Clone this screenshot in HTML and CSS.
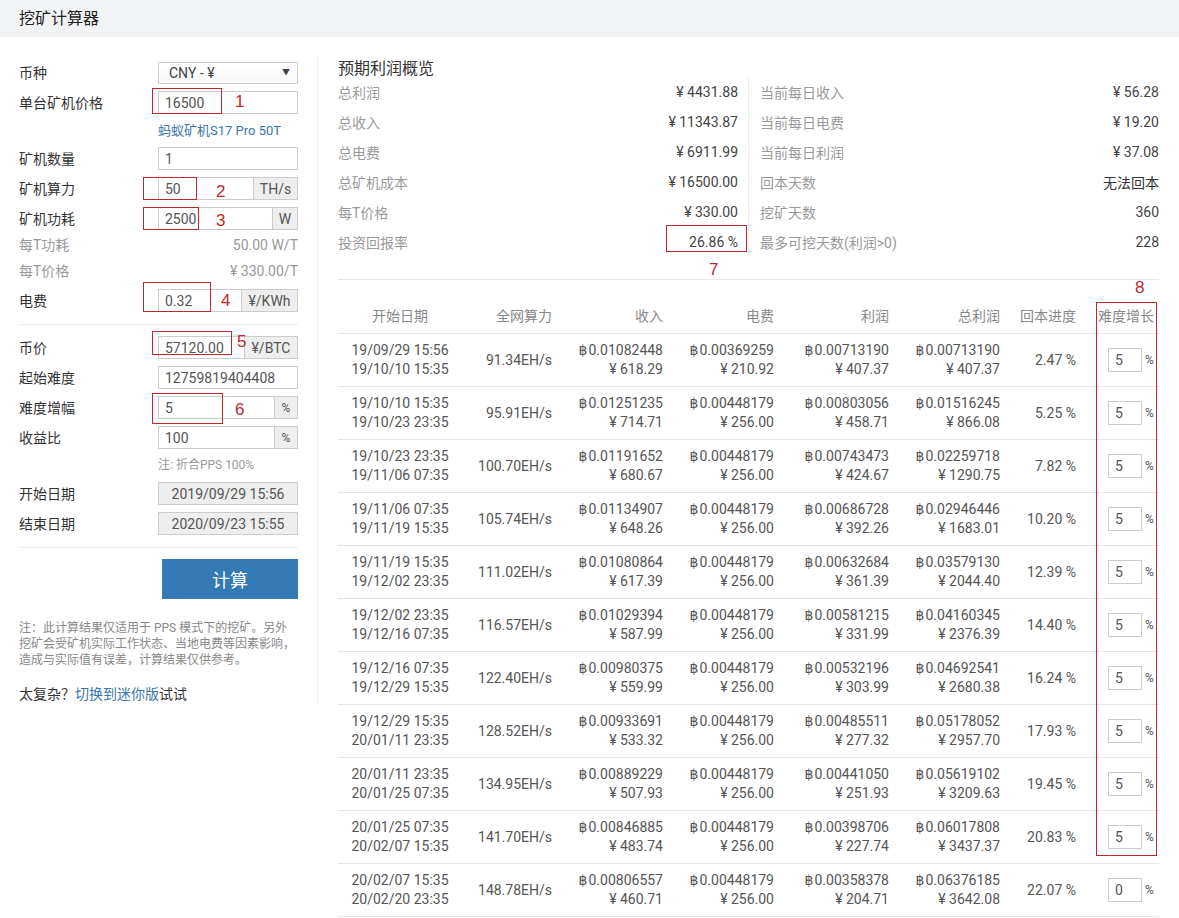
FILE: index.html
```html
<!DOCTYPE html>
<html lang="zh-CN">
<head>
<meta charset="utf-8">
<title>挖矿计算器</title>
<link rel="stylesheet" href="styles.css">
</head>
<body>
<header class="topbar">挖矿计算器</header>
<div class="main">
  <aside class="form">
    <div class="row sel-row"><label>币种</label><div class="select">CNY - ¥<span class="caret">▼</span></div></div>
    <div class="row"><label>单台矿机价格</label><div class="group"><input type="text" value="16500" readonly></div></div>
    <div class="link-row"><a class="link">蚂蚁矿机S17 Pro 50T</a></div>
    <div class="row"><label>矿机数量</label><div class="group"><input type="text" value="1" readonly></div></div>
    <div class="row"><label>矿机算力</label><div class="group"><input type="text" value="50" readonly><span class="addon w44">TH/s</span></div></div>
    <div class="row"><label>矿机功耗</label><div class="group"><input type="text" value="2500" readonly><span class="addon w25">W</span></div></div>
    <div class="info-row"><span>每T功耗</span><span>50.00 W/T</span></div>
    <div class="info-row"><span>每T价格</span><span>¥ 330.00/T</span></div>
    <div class="row"><label>电费</label><div class="group"><input type="text" value="0.32" readonly><span class="addon w56">¥/KWh</span></div></div>
    <div class="divider"></div>
    <div class="row"><label>币价</label><div class="group"><input type="text" value="57120.00" readonly><span class="addon w53">¥/BTC</span></div></div>
    <div class="row"><label>起始难度</label><div class="group"><input type="text" value="12759819404408" readonly></div></div>
    <div class="row"><label>难度增幅</label><div class="group"><input type="text" value="5" readonly><span class="addon w23">%</span></div></div>
    <div class="row"><label>收益比</label><div class="group"><input type="text" value="100" readonly><span class="addon w23">%</span></div></div>
    <div class="hint-row">注: 折合PPS 100%</div>
    <div class="row"><label>开始日期</label><div class="group"><input class="date" type="text" value="2019/09/29 15:56" readonly></div></div>
    <div class="row"><label>结束日期</label><div class="group"><input class="date" type="text" value="2020/09/23 15:55" readonly></div></div>
    <div class="divider last"></div>
    <div class="btn-row"><button class="calc">计算</button></div>
    <p class="note">注：此计算结果仅适用于 PPS 模式下的挖矿。另外挖矿会受矿机实际工作状态、当地电费等因素影响，造成与实际值有误差，计算结果仅供参考。</p>
    <p class="mini">太复杂<span class="fw">？</span><a class="link">切换到迷你版</a>试试</p>
  </aside>

  <section class="result">
    <h2 class="title">预期利润概览</h2>
    <div class="summary">
      <div class="scol left">
        <div class="srow"><span class="k">总利润</span><span class="v">¥ 4431.88</span></div>
        <div class="srow"><span class="k">总收入</span><span class="v">¥ 11343.87</span></div>
        <div class="srow"><span class="k">总电费</span><span class="v">¥ 6911.99</span></div>
        <div class="srow"><span class="k">总矿机成本</span><span class="v">¥ 16500.00</span></div>
        <div class="srow"><span class="k">每T价格</span><span class="v">¥ 330.00</span></div>
        <div class="srow"><span class="k">投资回报率</span><span class="v">26.86 %</span></div>
      </div>
      <div class="scol right">
        <div class="srow"><span class="k">当前每日收入</span><span class="v">¥ 56.28</span></div>
        <div class="srow"><span class="k">当前每日电费</span><span class="v">¥ 19.20</span></div>
        <div class="srow"><span class="k">当前每日利润</span><span class="v">¥ 37.08</span></div>
        <div class="srow"><span class="k">回本天数</span><span class="v dark">无法回本</span></div>
        <div class="srow"><span class="k">挖矿天数</span><span class="v">360</span></div>
        <div class="srow"><span class="k">最多可挖天数(利润&gt;0)</span><span class="v">228</span></div>
      </div>
    </div>
    <div class="rule"></div>
    <table class="tbl">
      <colgroup>
        <col class="c1"><col class="c2"><col class="c3"><col class="c4"><col class="c5"><col class="c6"><col class="c7"><col class="c8">
      </colgroup>
      <thead>
        <tr><th class="center">开始日期</th><th>全网算力</th><th>收入</th><th>电费</th><th>利润</th><th>总利润</th><th>回本进度</th><th class="lft">难度增长</th></tr>
      </thead>
      <tbody>
        <tr><td class="center">19/09/29 15:56<br>19/10/10 15:35</td><td>91.34EH/s</td><td><span class="b">฿</span>0.01082448<br>¥ 618.29</td><td><span class="b">฿</span>0.00369259<br>¥ 210.92</td><td><span class="b">฿</span>0.00713190<br>¥ 407.37</td><td><span class="b">฿</span>0.00713190<br>¥ 407.37</td><td>2.47 %</td><td class="lft"><input class="dif" type="text" value="5" readonly><span class="pc">%</span></td></tr>
        <tr><td class="center">19/10/10 15:35<br>19/10/23 23:35</td><td>95.91EH/s</td><td><span class="b">฿</span>0.01251235<br>¥ 714.71</td><td><span class="b">฿</span>0.00448179<br>¥ 256.00</td><td><span class="b">฿</span>0.00803056<br>¥ 458.71</td><td><span class="b">฿</span>0.01516245<br>¥ 866.08</td><td>5.25 %</td><td class="lft"><input class="dif" type="text" value="5" readonly><span class="pc">%</span></td></tr>
        <tr><td class="center">19/10/23 23:35<br>19/11/06 07:35</td><td>100.70EH/s</td><td><span class="b">฿</span>0.01191652<br>¥ 680.67</td><td><span class="b">฿</span>0.00448179<br>¥ 256.00</td><td><span class="b">฿</span>0.00743473<br>¥ 424.67</td><td><span class="b">฿</span>0.02259718<br>¥ 1290.75</td><td>7.82 %</td><td class="lft"><input class="dif" type="text" value="5" readonly><span class="pc">%</span></td></tr>
        <tr><td class="center">19/11/06 07:35<br>19/11/19 15:35</td><td>105.74EH/s</td><td><span class="b">฿</span>0.01134907<br>¥ 648.26</td><td><span class="b">฿</span>0.00448179<br>¥ 256.00</td><td><span class="b">฿</span>0.00686728<br>¥ 392.26</td><td><span class="b">฿</span>0.02946446<br>¥ 1683.01</td><td>10.20 %</td><td class="lft"><input class="dif" type="text" value="5" readonly><span class="pc">%</span></td></tr>
        <tr><td class="center">19/11/19 15:35<br>19/12/02 23:35</td><td>111.02EH/s</td><td><span class="b">฿</span>0.01080864<br>¥ 617.39</td><td><span class="b">฿</span>0.00448179<br>¥ 256.00</td><td><span class="b">฿</span>0.00632684<br>¥ 361.39</td><td><span class="b">฿</span>0.03579130<br>¥ 2044.40</td><td>12.39 %</td><td class="lft"><input class="dif" type="text" value="5" readonly><span class="pc">%</span></td></tr>
        <tr><td class="center">19/12/02 23:35<br>19/12/16 07:35</td><td>116.57EH/s</td><td><span class="b">฿</span>0.01029394<br>¥ 587.99</td><td><span class="b">฿</span>0.00448179<br>¥ 256.00</td><td><span class="b">฿</span>0.00581215<br>¥ 331.99</td><td><span class="b">฿</span>0.04160345<br>¥ 2376.39</td><td>14.40 %</td><td class="lft"><input class="dif" type="text" value="5" readonly><span class="pc">%</span></td></tr>
        <tr><td class="center">19/12/16 07:35<br>19/12/29 15:35</td><td>122.40EH/s</td><td><span class="b">฿</span>0.00980375<br>¥ 559.99</td><td><span class="b">฿</span>0.00448179<br>¥ 256.00</td><td><span class="b">฿</span>0.00532196<br>¥ 303.99</td><td><span class="b">฿</span>0.04692541<br>¥ 2680.38</td><td>16.24 %</td><td class="lft"><input class="dif" type="text" value="5" readonly><span class="pc">%</span></td></tr>
        <tr><td class="center">19/12/29 15:35<br>20/01/11 23:35</td><td>128.52EH/s</td><td><span class="b">฿</span>0.00933691<br>¥ 533.32</td><td><span class="b">฿</span>0.00448179<br>¥ 256.00</td><td><span class="b">฿</span>0.00485511<br>¥ 277.32</td><td><span class="b">฿</span>0.05178052<br>¥ 2957.70</td><td>17.93 %</td><td class="lft"><input class="dif" type="text" value="5" readonly><span class="pc">%</span></td></tr>
        <tr><td class="center">20/01/11 23:35<br>20/01/25 07:35</td><td>134.95EH/s</td><td><span class="b">฿</span>0.00889229<br>¥ 507.93</td><td><span class="b">฿</span>0.00448179<br>¥ 256.00</td><td><span class="b">฿</span>0.00441050<br>¥ 251.93</td><td><span class="b">฿</span>0.05619102<br>¥ 3209.63</td><td>19.45 %</td><td class="lft"><input class="dif" type="text" value="5" readonly><span class="pc">%</span></td></tr>
        <tr><td class="center">20/01/25 07:35<br>20/02/07 15:35</td><td>141.70EH/s</td><td><span class="b">฿</span>0.00846885<br>¥ 483.74</td><td><span class="b">฿</span>0.00448179<br>¥ 256.00</td><td><span class="b">฿</span>0.00398706<br>¥ 227.74</td><td><span class="b">฿</span>0.06017808<br>¥ 3437.37</td><td>20.83 %</td><td class="lft"><input class="dif" type="text" value="5" readonly><span class="pc">%</span></td></tr>
        <tr><td class="center">20/02/07 15:35<br>20/02/20 23:35</td><td>148.78EH/s</td><td><span class="b">฿</span>0.00806557<br>¥ 460.71</td><td><span class="b">฿</span>0.00448179<br>¥ 256.00</td><td><span class="b">฿</span>0.00358378<br>¥ 204.71</td><td><span class="b">฿</span>0.06376185<br>¥ 3642.08</td><td>22.07 %</td><td class="lft"><input class="dif" type="text" value="0" readonly><span class="pc">%</span></td></tr>
      </tbody>
    </table>
  </section>
</div>

<div class="ann-box b1"></div><span class="ann-n n1">1</span>
<div class="ann-box b2"></div><span class="ann-n n2">2</span>
<div class="ann-box b3"></div><span class="ann-n n3">3</span>
<div class="ann-box b4"></div><span class="ann-n n4">4</span>
<div class="ann-box b5"></div><span class="ann-n n5">5</span>
<div class="ann-box b6"></div><span class="ann-n n6">6</span>
<div class="ann-box b7"></div><span class="ann-n n7">7</span>
<div class="ann-box b8"></div><span class="ann-n n8">8</span>
</body>
</html>
```
FILE: styles.css
```css
* { box-sizing: border-box; margin: 0; padding: 0; }
html, body { background: #fff; }
body {
  margin: 0;
  position: relative;
  width: 1179px;
  height: 918px;
  overflow: hidden;
  font-family: Roboto, "Noto Sans CJK SC", sans-serif;
  font-size: 14px;
  color: #333;
}
.topbar {
  height: 37px;
  background: #f2f3f5;
  padding-left: 19px;
  font-size: 16px;
  line-height: 37px;
  color: #222;
  font-weight: normal;
}
.main {
  display: flex;
  align-items: flex-start;
  padding-top: 19px;
}

/* ---------- form ---------- */
.form {
  width: 318px;
  flex: none;
  padding: 6px 19px 0 19px;
  border-right: 1px solid #eee;
}
.row {
  display: flex;
  align-items: center;
  height: 23px;
  margin-bottom: 7px;
}
.row.sel-row { height: 22px; }
.row label {
  width: 139px;
  flex: none;
  line-height: 20px;
  color: #333;
}
.select {
  position: relative;
  width: 140px;
  height: 22px;
  border: 1px solid #ccc;
  border-radius: 1px;
  padding-left: 10px;
  line-height: 20px;
  color: #444;
  background: linear-gradient(#fff, #f8f8f8);
}
.caret {
  position: absolute;
  right: 7px;
  top: 0;
  font-size: 8px;
  color: #444;
  line-height: 20px;
}
.group {
  display: flex;
  width: 140px;
  height: 23px;
}
.group input {
  flex: 1;
  min-width: 0;
  height: 23px;
  border: 1px solid #ccc;
  padding: 0 6px;
  font-family: Roboto, "Noto Sans CJK SC", sans-serif;
  font-size: 14px;
  color: #555;
  background: #fff;
  outline: none;
}
.group input.date {
  background: #eee;
  text-align: center;
  color: #555;
}
.addon {
  flex: none;
  height: 23px;
  border: 1px solid #ccc;
  border-left: none;
  background: #eee;
  color: #555;
  font-size: 14px;
  display: flex;
  align-items: center;
  justify-content: center;
}
.w44 { width: 44px; }
.w25 { width: 25px; }
.w56 { width: 56px; }
.w53 { width: 53px; }
.w23 { width: 23px; font-size: 12px; }

.link-row {
  height: 19px;
  margin-bottom: 7px;
  padding-left: 139px;
  line-height: 19px;
  font-size: 13px;
}
.link { color: #3a76a8; text-decoration: none; }
.info-row {
  display: flex;
  justify-content: space-between;
  height: 16px;
  line-height: 16px;
  margin-bottom: 10px;
  color: #999;
}
.divider {
  height: 1px;
  background: #eee;
  margin: 12px 0 11px;
}
.hint-row {
  height: 18px;
  line-height: 18px;
  margin-bottom: 8px;
  padding-left: 139px;
  font-size: 12px;
  color: #999;
}
.btn-row {
  display: flex;
  justify-content: flex-end;
}
.calc {
  width: 136px;
  height: 40px;
  border: none;
  background: #337ab7;
  color: #fff;
  font-family: "Noto Sans CJK SC", sans-serif;
  font-size: 18px;
}
.note {
  margin-top: 21px;
  font-size: 12px;
  line-height: 16px;
  color: #888;
}
.mini {
  margin-top: 15px;
  line-height: 20px;
  font-size: 14px;
  color: #333;
}
.mini .fw { font-family: "Noto Sans CJK SC", sans-serif; }

/* ---------- result ---------- */
.result {
  width: 821px;
  margin-left: 20px;
  padding-top: 3px;
}
.title {
  font-size: 16px;
  font-weight: normal;
  line-height: 19px;
  height: 19px;
  color: #333;
}
.summary {
  display: flex;
  margin-top: -1px;
}
.scol.left {
  width: 411px;
  padding-right: 10px;
  border-right: 1px solid #eee;
}
.scol.right {
  flex: 1;
  padding-left: 11px;
}
.srow {
  display: flex;
  justify-content: space-between;
  align-items: center;
  height: 30px;
}
.srow .k { color: #999; }
.srow .v { color: #444; }
.srow .v.dark { color: #333; }
.rule {
  height: 1px;
  background: #e8e8e8;
  margin-top: 22px;
}
.tbl {
  width: 821px;
  table-layout: fixed;
  border-collapse: separate;
  border-spacing: 0;
  margin-top: 20px;
}
.c1 { width: 124px; }
.c2 { width: 100px; }
.c3 { width: 111px; }
.c4 { width: 111px; }
.c5 { width: 115px; }
.c6 { width: 111px; }
.c7 { width: 76px; }
.c8 { width: 73px; }
.tbl th {
  font-weight: normal;
  color: #888;
  padding: 7px 10px 7px 0;
  line-height: 19px;
  text-align: right;
  border-bottom: 1px solid #e6e6e6;
  white-space: nowrap;
}
.tbl td {
  padding: 7px 10px 7px 0;
  line-height: 19px;
  text-align: right;
  color: #555;
  border-bottom: 1px solid #e6e6e6;
  vertical-align: middle;
  white-space: nowrap;
}
.tbl td .b {
  font-family: "DejaVu Sans", sans-serif;
  font-size: 14px;
  margin-right: 1px;
}
.tbl .center { text-align: center; padding-right: 0; }
.tbl th.lft { text-align: left; padding-left: 12px; padding-right: 0; }
.tbl td.lft { text-align: left; padding-left: 22px; padding-right: 0; }
.dif {
  display: inline-block;
  vertical-align: middle;
  width: 34px;
  height: 24px;
  border: 1px solid #ccc;
  padding: 0 6px;
  font-family: Roboto, sans-serif;
  font-size: 14px;
  color: #555;
  background: #fff;
  outline: none;
}
.pc {
  display: inline-block;
  vertical-align: middle;
  margin-left: 3px;
  font-size: 12px;
  color: #555;
}

/* ---------- red annotations (overlay) ---------- */
.ann-box {
  position: absolute;
  border: 1px solid #c0282d;
}
.b1 { left: 152px; top: 88px; width: 70px; height: 26px; }
.b2 { left: 143px; top: 177px; width: 54px; height: 23px; }
.b3 { left: 143px; top: 207px; width: 56px; height: 23px; }
.b4 { left: 143px; top: 282px; width: 68px; height: 30px; }
.b5 { left: 152px; top: 331px; width: 80px; height: 24px; }
.b6 { left: 152px; top: 393px; width: 71px; height: 31px; }
.b7 { left: 666px; top: 225px; width: 81px; height: 27px; }
.b8 { left: 1096px; top: 302px; width: 61px; height: 554px; }
.ann-n {
  position: absolute;
  color: #c0282d;
  font-family: "Liberation Sans", sans-serif;
  font-size: 17px;
  line-height: 18px;
}
.n1 { left: 235px; top: 93px; }
.n2 { left: 216px; top: 183px; }
.n3 { left: 216px; top: 212px; }
.n4 { left: 221px; top: 292px; }
.n5 { left: 237px; top: 333px; }
.n6 { left: 235px; top: 401px; }
.n7 { left: 709px; top: 261px; }
.n8 { left: 1135px; top: 279px; }
```
